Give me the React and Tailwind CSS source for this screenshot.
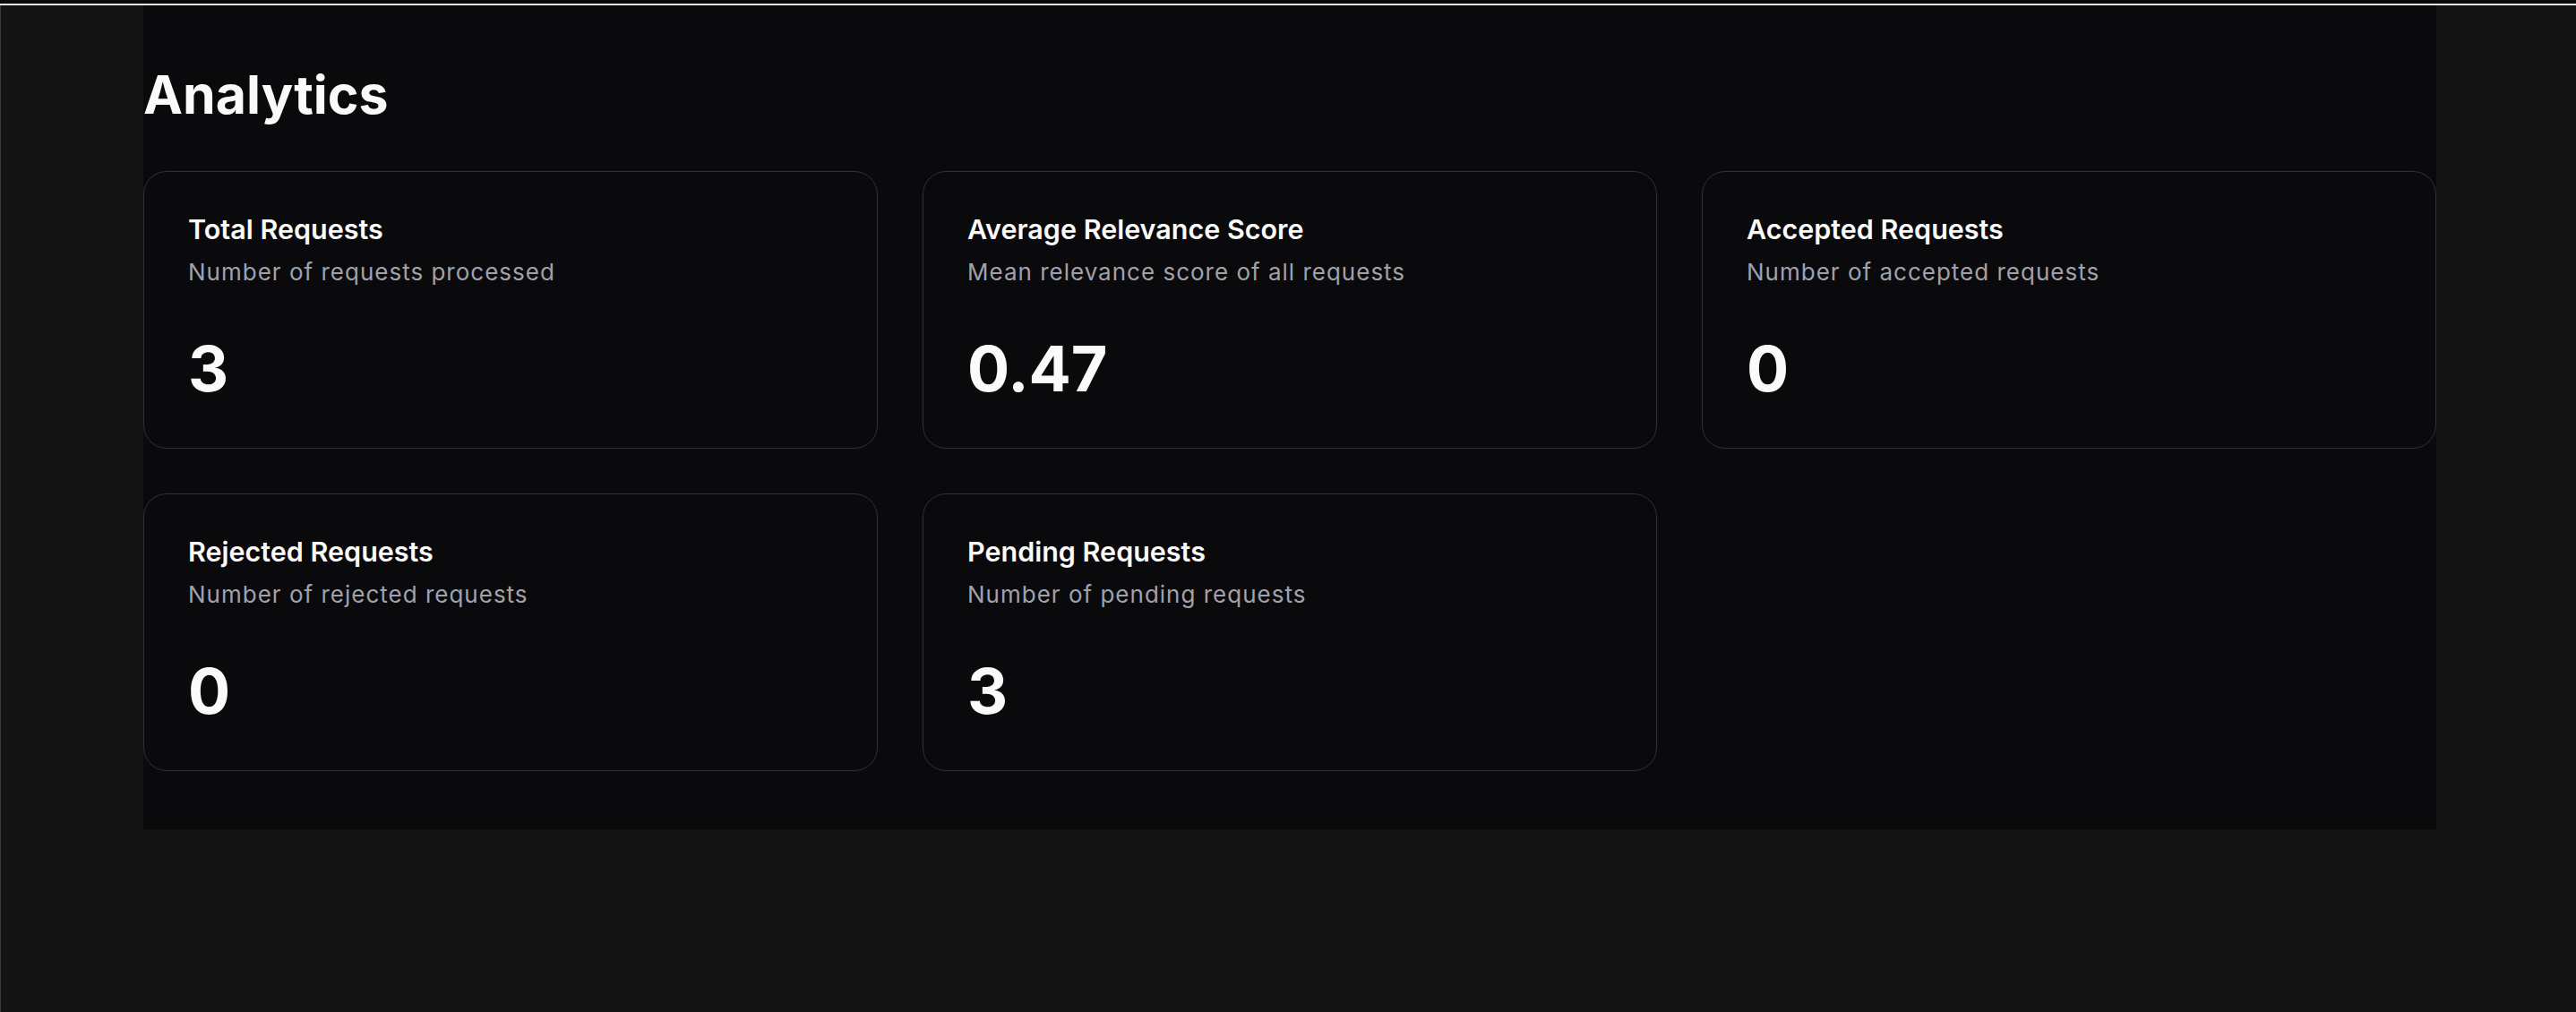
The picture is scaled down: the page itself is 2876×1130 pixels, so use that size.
import React from 'react'

const stats = [
  { title: 'Total Requests', description: 'Number of requests processed', value: '3' },
  { title: 'Average Relevance Score', description: 'Mean relevance score of all requests', value: '0.47' },
  { title: 'Accepted Requests', description: 'Number of accepted requests', value: '0' },
  { title: 'Rejected Requests', description: 'Number of rejected requests', value: '0' },
  { title: 'Pending Requests', description: 'Number of pending requests', value: '3' },
]

function StatCard({ title, description, value }) {
  return (
    <div className="rounded-[26px] border border-[#313135] bg-[#0a0a0c] px-[49px] pt-[49px] pb-[52px]">
      <h3 className="text-[30.5px] leading-[30px] font-semibold text-[#fafafa]">{title}</h3>
      <p className="mt-[15px] text-[26px] leading-[36px] tracking-[1px] text-[#a1a1aa]">{description}</p>
      <div className="mt-[54px] text-[70px] leading-[72px] font-bold text-[#fafafa]">{value}</div>
    </div>
  )
}

export default function App() {
  return (
    <div className="min-h-[1130px] flex flex-col bg-[#141414]" style={{ fontFamily: 'Inter, "Noto Sans", sans-serif' }}>
      {/* window chrome strip */}
      <div className="h-[4px] bg-[#0b0b0d]" />
      <div className="h-[2px] bg-[#e4e4e4]" />

      <div className="flex-1 border-l border-[#3a3a3a] pl-[159px]">
        <main className="w-[2560px] bg-[#0a0a0c] pt-[70px] pb-[65px]">
          <h1 className="text-[59px] leading-none font-bold text-[#fafafa]">Analytics</h1>

          <div className="mt-[56px] grid grid-cols-3 gap-[50px]">
            {stats.map(s => (
              <StatCard key={s.title} {...s} />
            ))}
          </div>
        </main>
      </div>
    </div>
  )
}
